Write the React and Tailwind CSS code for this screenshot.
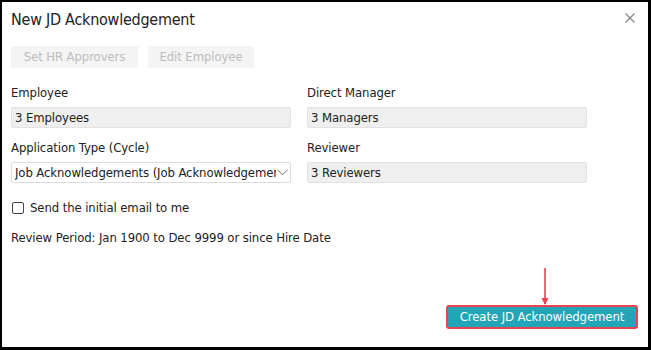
const font = "font-['DejaVu_Sans_Condensed','DejaVu_Sans',sans-serif] tracking-[-0.1px]";

function Field({ label, children }) {
  return (
    <div className="flex flex-col">
      <div className="text-[13px] leading-[16px] text-[#222]">{label}</div>
      <div className="mt-[6px]">{children}</div>
    </div>
  );
}

function ReadOnly({ value }) {
  return (
    <div className="h-[21px] w-[280px] rounded-[2px] border border-[#e2e2e2] bg-[#efefef] px-[3px] text-[13px] leading-[19px] text-[#222]">
      {value}
    </div>
  );
}

export default function App() {
  return (
    <div className={`relative flex h-[350px] w-[651px] flex-col border-t-2 border-l-2 border-r-[3px] border-b-[3px] border-black bg-white ${font}`}>
      {/* header */}
      <div className="flex items-center justify-between pt-[8px] pl-[9px] pr-[12px]">
        <div className="text-[16px] leading-[20px] tracking-[-0.25px] text-[#222]">New JD Acknowledgement</div>
        <svg width="12" height="12" viewBox="0 0 12 12" className="mt-[-4px]">
          <path d="M1.5 1.5 L10.5 10.5 M10.5 1.5 L1.5 10.5" stroke="#8a8a8a" strokeWidth="1.4" />
        </svg>
      </div>

      {/* action buttons */}
      <div className="mt-[16px] flex gap-[10px] pl-[9px]">
        <div className="flex h-[22px] w-[127px] items-center justify-center rounded-[2px] bg-[#f4f4f4] text-[13px] text-[#bdbdbd]">
          Set HR Approvers
        </div>
        <div className="flex h-[22px] w-[106px] items-center justify-center rounded-[2px] bg-[#f4f4f4] text-[13px] text-[#bdbdbd]">
          Edit Employee
        </div>
      </div>

      {/* fields */}
      <div className="mt-[17px] grid grid-cols-[280px_280px] gap-x-[16px] gap-y-[12px] pl-[9px]">
        <Field label="Employee">
          <ReadOnly value="3 Employees" />
        </Field>
        <Field label="Direct Manager">
          <ReadOnly value="3 Managers" />
        </Field>
        <Field label="Application Type (Cycle)">
          <div className="flex h-[21px] w-[280px] items-center rounded-[2px] border border-[#dcdcdc] bg-white pl-[3px] pr-[2px] text-[13px] leading-[19px] text-[#222]">
            <span className="flex-1 overflow-hidden whitespace-nowrap">Job Acknowledgements (Job Acknowledgements)</span>
            <svg width="11" height="7" viewBox="0 0 11 7" className="ml-[1px] shrink-0">
              <path d="M0.5 0.8 L5.5 5.8 L10.5 0.8" fill="none" stroke="#666" strokeWidth="1" />
            </svg>
          </div>
        </Field>
        <Field label="Reviewer">
          <ReadOnly value="3 Reviewers" />
        </Field>
      </div>

      {/* checkbox */}
      <label className="mt-[17px] flex items-center gap-[6px] pl-[10px] text-[13px] leading-[16px] text-[#222]">
        <span className="h-[12px] w-[12px] rounded-[2px] border border-[#444] bg-white" />
        Send the initial email to me
      </label>

      <div className="mt-[14px] pl-[9px] text-[13px] leading-[16px] text-[#222]">
        Review Period: Jan 1900 to Dec 9999 or since Hire Date
      </div>

      {/* footer */}
      <div className="mt-auto flex justify-end pb-[18px] pr-[10px]">
        <button className="h-[24px] w-[192px] rounded-[3px] border-2 border-[#e8434f] bg-[#21a5b7] text-[13px] leading-[18px] text-white">
          Create JD Acknowledgement
        </button>
      </div>

      {/* annotation arrow */}
      <svg className="absolute left-[536px] top-[266px]" width="14" height="40" viewBox="0 0 14 40">
        <path d="M7 0 L7 36" stroke="#e8434f" strokeWidth="1.6" />
        <path d="M3.5 30 L7 37 L10.5 30 Z" fill="#e8434f" />
      </svg>
    </div>
  );
}
